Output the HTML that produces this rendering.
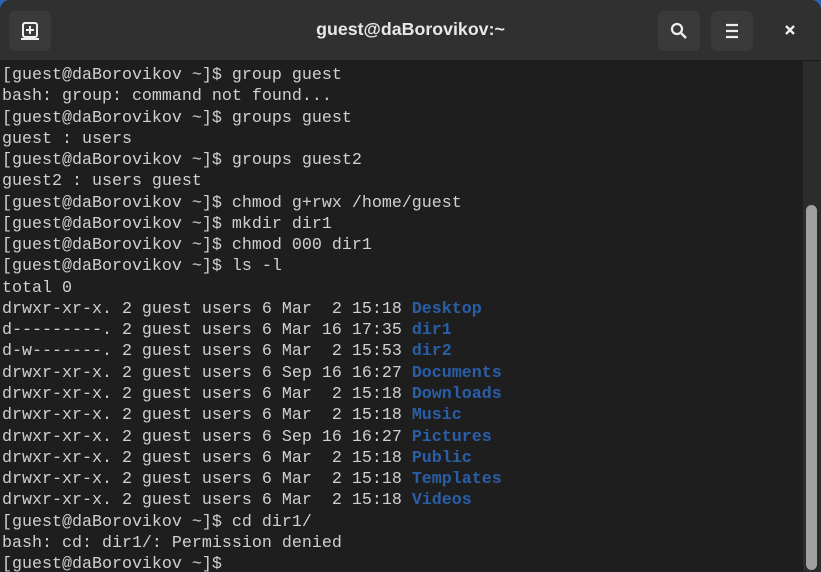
<!DOCTYPE html>
<html><head><style>
html,body{margin:0;padding:0;width:821px;height:572px;overflow:hidden;background:#2a66b8;}
.win{position:absolute;left:0;top:0;width:821px;height:572px;background:#1e1e1e;border-radius:10px 10px 0 0;overflow:hidden;}
.hb{position:absolute;left:0;top:0;width:821px;height:60px;background:#303030;border-bottom:1px solid #1a1a1a;}
.btn{position:absolute;top:11px;width:42px;height:40px;background:#3a3a3a;border-radius:6px;}
.title{position:absolute;left:0;right:0;top:19px;text-align:center;color:#e8e8e8;font:bold 17.8px "Liberation Sans",sans-serif;}
pre{position:absolute;left:2px;top:65px;margin:0;font:16.67px/21.26px "Liberation Mono",monospace;color:#d0d0d0;}
b{color:#2a5fa8;font-weight:bold;}
.track{position:absolute;left:803px;top:61px;width:18px;height:511px;background:#2c2c2c;}
.thumb{position:absolute;left:806px;top:205px;width:11px;height:365px;background:#a0a0a0;border-radius:6px;}
</style></head><body><div class="win">
<div class="hb">
<div class="btn" style="left:9px"><svg width="42" height="40"><rect x="14" y="12" width="14" height="14" rx="2" fill="none" stroke="#eee" stroke-width="2"/><path d="M21 15v8M17 19h8M12 28h18" stroke="#eee" stroke-width="2"/></svg></div>
<div class="title">guest@daBorovikov:~</div>
<div class="btn" style="left:658px"><svg width="42" height="40"><circle cx="19" cy="18" r="5" fill="none" stroke="#eee" stroke-width="2.2"/><path d="M23 22l5 5" stroke="#eee" stroke-width="2.4"/></svg></div>
<div class="btn" style="left:711px"><svg width="42" height="40"><path d="M15 14h12M15 20h12M15 26h12" stroke="#eee" stroke-width="2.2"/></svg></div>
<svg style="position:absolute;left:781px;top:21px" width="20" height="20"><path d="M5 5l8 8M13 5l-8 8" stroke="#eee" stroke-width="2.4"/></svg>
</div>
<pre>[guest@daBorovikov ~]$ group guest
bash: group: command not found...
[guest@daBorovikov ~]$ groups guest
guest : users
[guest@daBorovikov ~]$ groups guest2
guest2 : users guest
[guest@daBorovikov ~]$ chmod g+rwx /home/guest
[guest@daBorovikov ~]$ mkdir dir1
[guest@daBorovikov ~]$ chmod 000 dir1
[guest@daBorovikov ~]$ ls -l
total 0
drwxr-xr-x. 2 guest users 6 Mar  2 15:18 <b>Desktop</b>
d---------. 2 guest users 6 Mar 16 17:35 <b>dir1</b>
d-w-------. 2 guest users 6 Mar  2 15:53 <b>dir2</b>
drwxr-xr-x. 2 guest users 6 Sep 16 16:27 <b>Documents</b>
drwxr-xr-x. 2 guest users 6 Mar  2 15:18 <b>Downloads</b>
drwxr-xr-x. 2 guest users 6 Mar  2 15:18 <b>Music</b>
drwxr-xr-x. 2 guest users 6 Sep 16 16:27 <b>Pictures</b>
drwxr-xr-x. 2 guest users 6 Mar  2 15:18 <b>Public</b>
drwxr-xr-x. 2 guest users 6 Mar  2 15:18 <b>Templates</b>
drwxr-xr-x. 2 guest users 6 Mar  2 15:18 <b>Videos</b>
[guest@daBorovikov ~]$ cd dir1/
bash: cd: dir1/: Permission denied
[guest@daBorovikov ~]$ </pre>
<div class="track"></div><div class="thumb"></div>
</div></body></html>
